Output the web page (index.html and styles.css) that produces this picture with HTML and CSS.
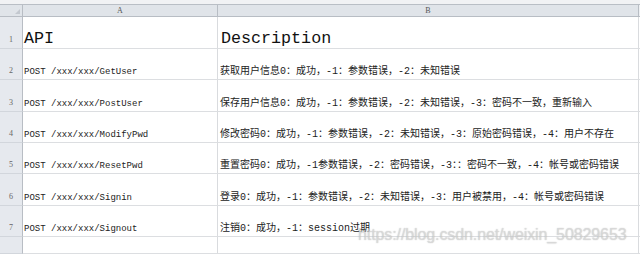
FILE: index.html
```html
<!DOCTYPE html>
<html lang="zh">
<head>
<meta charset="utf-8">
<title>API</title>
<link rel="stylesheet" href="styles.css">
</head>
<body>
<div class="app">
  <div class="topbar"></div>
  <div class="sheet">
    <div class="corner"><span class="tri"></span></div>
    <div class="colhdr">A</div>
    <div class="colhdr">B</div>
    <div class="colhdr edge"></div>

    <div class="rowhdr r1">1</div>
    <div class="cell head">API</div>
    <div class="cell head headb">Description</div>
    <div class="cell edge"></div>

    <div class="rowhdr">2</div>
    <div class="cell api">POST /xxx/xxx/GetUser</div>
    <div class="cell desc">获取用户信息0：成功，-1：参数错误，-2：未知错误</div>
    <div class="cell edge"></div>

    <div class="rowhdr">3</div>
    <div class="cell api">POST /xxx/xxx/PostUser</div>
    <div class="cell desc">保存用户信息0：成功，-1：参数错误，-2：未知错误，-3：密码不一致，重新输入</div>
    <div class="cell edge"></div>

    <div class="rowhdr">4</div>
    <div class="cell api">POST /xxx/xxx/ModifyPwd</div>
    <div class="cell desc">修改密码0：成功，-1：参数错误，-2：未知错误，-3：原始密码错误，-4：用户不存在</div>
    <div class="cell edge"></div>

    <div class="rowhdr">5</div>
    <div class="cell api">POST /xxx/xxx/ResetPwd</div>
    <div class="cell desc">重置密码0：成功，-1参数错误，-2：密码错误，-3：：密码不一致，-4：帐号或密码错误</div>
    <div class="cell edge"></div>

    <div class="rowhdr">6</div>
    <div class="cell api">POST /xxx/xxx/Signin</div>
    <div class="cell desc">登录0：成功，-1：参数错误，-2：未知错误，-3：用户被禁用，-4：帐号或密码错误</div>
    <div class="cell edge"></div>

    <div class="rowhdr">7</div>
    <div class="cell api">POST /xxx/xxx/Signout</div>
    <div class="cell desc">注销0：成功，-1：session过期</div>
    <div class="cell edge"></div>

    <div class="rowhdr"></div>
    <div class="cell"></div>
    <div class="cell"></div>
    <div class="cell edge"></div>
  </div>
  <div class="watermark">https://blog.csdn.net/weixin_50829653</div>
</div>
</body>
</html>
```
FILE: styles.css
```css
* { box-sizing: border-box; }
html, body { margin: 0; padding: 0; background: #fff; }
.app {
  position: relative;
  width: 640px;
  height: 254px;
  overflow: hidden;
  display: flex;
  flex-direction: column;
  font-family: "Liberation Mono", "Noto Sans CJK SC", monospace;
  color: #1e1e1e;
}
.topbar {
  height: 5px;
  flex: none;
  background: #f1f2f4;
  border-bottom: 1px solid #b9bec5;
}
.sheet {
  flex: 1;
  display: grid;
  grid-template-columns: 23px 195px 421px 1fr;
  grid-template-rows: 12px 32px 31px 32px 31px 31px 32px 31px 1fr;
}
.corner, .colhdr {
  background: #e0e4e9;
  border-right: 1px solid #b8bdc4;
  border-bottom: 1px solid #b8bdc4;
  font-family: "Liberation Serif", serif;
  font-size: 8px;
  color: #555;
  display: flex;
  align-items: center;
  justify-content: center;
  line-height: 10px;
}
.corner { position: relative; }
.tri {
  position: absolute;
  right: 2px;
  bottom: 2px;
  width: 0;
  height: 0;
  border-left: 5px solid transparent;
  border-bottom: 5px solid #c3c8cf;
}
.colhdr.edge { border-right: none; background: #eef0f3; }
.rowhdr {
  background: #e6e9ee;
  border-right: 1px solid #b8bdc4;
  border-bottom: 1px solid #d2d6dc;
  font-family: "Liberation Serif", serif;
  font-size: 8px;
  color: #666;
  display: flex;
  align-items: flex-end;
  justify-content: center;
  padding-bottom: 3px;
  line-height: 10px;
}
.cell {
  border-right: 1px solid #d9dbde;
  border-bottom: 1px solid #dcdee1;
  display: flex;
  align-items: flex-end;
  white-space: nowrap;
  overflow: visible;
  padding-bottom: 1px;
  line-height: 12px;
}
.cell.edge { border-right: none; }
.cell.head {
  font-size: 16.7px;
  line-height: 16px;
  padding-left: 1px;
  padding-bottom: 1px;
  color: #111;
}
.cell.headb { padding-left: 3px; }
.cell.api {
  font-size: 9px;
  padding-left: 1px;
  color: #222;
}
.cell.desc {
  font-size: 10px;
  padding-left: 2px;
  color: #222;
}
.watermark {
  position: absolute;
  left: 358px;
  top: 226px;
  font-family: "Liberation Sans", Arial, sans-serif;
  font-size: 16px;
  letter-spacing: -0.1px;
  color: rgba(232, 232, 232, 0.6);
  text-shadow: 0 0 1px rgba(110, 110, 110, 0.5);
  white-space: nowrap;
}
```
